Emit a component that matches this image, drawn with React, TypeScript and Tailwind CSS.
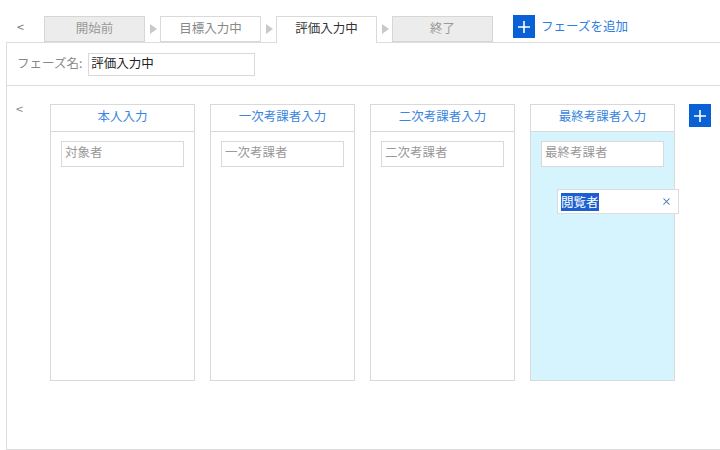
import { X } from "lucide-react";

const tabs = [
  { label: "開始前", kind: "done" },
  { label: "目標入力中", kind: "idle" },
  { label: "評価入力中", kind: "active" },
  { label: "終了", kind: "done" },
] as const;

const columns = [
  { title: "本人入力", placeholder: "対象者" },
  { title: "一次考課者入力", placeholder: "一次考課者" },
  { title: "二次考課者入力", placeholder: "二次考課者" },
  { title: "最終考課者入力", placeholder: "最終考課者", active: true },
];

function Arrow() {
  return (
    <div className="flex h-[26px] w-[15px] items-center justify-center">
      <svg width="8" height="10" viewBox="0 0 8 10">
        <path d="M1 0 L8 5 L1 10 Z" fill="#c9c9c9" />
      </svg>
    </div>
  );
}

function PlusButton() {
  return (
    <div className="flex h-[23px] w-[22px] items-center justify-center bg-[#0a61d6]">
      <svg width="12" height="12" viewBox="0 0 12 12">
        <path d="M6 0 V12 M0 6 H12" stroke="white" strokeWidth="1.6" />
      </svg>
    </div>
  );
}

export default function App() {
  return (
    <div
      className="relative h-[450px] w-[720px] overflow-hidden bg-white text-[12.5px] text-[#333]"
      style={{ fontFamily: '"Noto Sans CJK JP", "Noto Sans", sans-serif' }}
    >
      {/* phase tabs */}
      <div className="flex h-[42px] items-end pl-[17px]">
        <div className="flex h-[26px] w-[27px] items-center pb-[3px] text-[#777]">&lt;</div>
        {tabs.map((t, i) => (
          <div key={t.label} className="flex items-end">
            {t.kind === "active" ? (
              <div className="relative z-10 -mb-px flex h-[27px] w-[101px] items-center justify-center border border-b-0 border-[#d9d9d9] bg-white pb-[3px] text-[#333]">
                {t.label}
              </div>
            ) : (
              <div
                className={
                  t.kind === "done"
                    ? "flex h-[26px] w-[101px] items-center justify-center border border-[#d6d6d6] bg-[#ececec] pb-[2px] text-[#999]"
                    : "flex h-[26px] w-[101px] items-center justify-center border border-[#d9d9d9] bg-white pb-[2px] text-[#888]"
                }
              >
                {t.label}
              </div>
            )}
            {i < tabs.length - 1 && <Arrow />}
          </div>
        ))}
        <div className="mb-[4px] ml-[20px] flex items-center gap-[6px]">
          <PlusButton />
          <span className="pb-[1px] text-[#2f7de1]">フェーズを追加</span>
        </div>
      </div>

      {/* phase body */}
      <div className="ml-[6px] flex h-[408px] flex-col border border-r-0 border-[#dcdcdc]">
        <div className="flex h-[43px] items-center gap-[6px] border-b border-[#dcdcdc] pl-[10px]">
          <span className="pb-[2px] text-[#888]">フェーズ名:</span>
          <div className="flex h-[23px] w-[167px] items-center border border-[#d9d9d9] px-[2px] pb-[2px] text-[#222]">
            評価入力中
          </div>
        </div>

        <div className="flex pt-[18px]">
          <div className="w-[43px] pl-[9px] leading-[10px] text-[#888]">&lt;</div>
          <div className="flex gap-[15px]">
            {columns.map((c) => (
              <div
                key={c.title}
                className={
                  c.active
                    ? "h-[277px] w-[145px] border border-[#d9d9d9] bg-[#d6f4fd]"
                    : "h-[277px] w-[145px] border border-[#d9d9d9] bg-white"
                }
              >
                <div className="flex h-[27px] items-center justify-center border-b border-[#d9d9d9] bg-white pb-[3px] text-[#3a86e0]">
                  {c.title}
                </div>
                <div className="mx-[10px] mt-[9px] flex h-[26px] items-center border border-[#d9d9d9] bg-white px-[3px] pb-[3px] text-[#999]">
                  {c.placeholder}
                </div>
              </div>
            ))}
          </div>
          <div className="ml-[14px]">
            <PlusButton />
          </div>
        </div>
      </div>

      {/* role picker */}
      <div className="absolute left-[557px] top-[189px] flex h-[25px] w-[122px] items-center justify-between border border-[#dcdcdc] bg-white pl-[3px] pr-[6px]">
        <span className="bg-[#1d5fd1] leading-[18px] text-white">閲覧者</span>
        <X size={11} strokeWidth={2.2} className="text-[#3d6fb3]" />
      </div>
    </div>
  );
}
